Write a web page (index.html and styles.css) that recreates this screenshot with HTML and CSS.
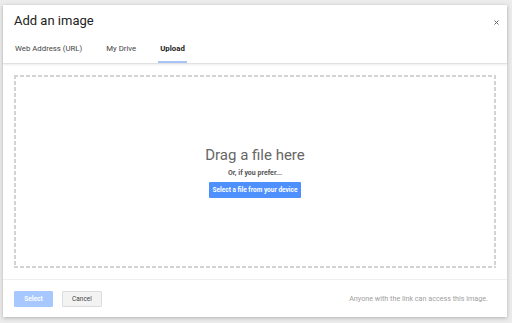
FILE: index.html
```html
<!DOCTYPE html>
<html>
<head>
<meta charset="utf-8">
<link rel="stylesheet" href="styles.css">
</head>
<body>
<div class="dialog">
  <div class="header">
    <div class="title-row">
      <div class="title">Add an image</div>
      <svg class="close" width="5" height="5" viewBox="0 0 5 5"><path d="M0.5 0.5L4.5 4.5M4.5 0.5L0.5 4.5" stroke="#666" stroke-width="1"/></svg>
    </div>
    <div class="tabs">
      <div class="tab">Web Address (URL)</div>
      <div class="tab">My Drive</div>
      <div class="tab active">Upload</div>
    </div>
  </div>
  <div class="body">
    <div class="drop">
      <div class="drag">Drag a file here</div>
      <div class="prefer">Or, if you prefer...</div>
      <div class="pick">Select a file from your device</div>
    </div>
  </div>
  <div class="footer">
    <div class="btn select">Select</div>
    <div class="btn cancel">Cancel</div>
    <div class="note">Anyone with the link can access this image.</div>
  </div>
</div>
</body>
</html>
```
FILE: styles.css
```css
html, body { margin: 0; }
body {
  width: 512px;
  height: 323px;
  background: #ececec;
  font-family: Roboto, "Liberation Sans", sans-serif;
  padding: 5px 0 0 3px;
  box-sizing: border-box;
  overflow: hidden;
}
.dialog {
  width: 504px;
  height: 312px;
  background: #fff;
  box-shadow: 0 1px 4px rgba(0,0,0,0.25);
  display: flex;
  flex-direction: column;
}
.header {
  height: 59px;
  box-sizing: border-box;
  padding: 0 0 0 11px;
  border-bottom: 1px solid #e2e2e2;
  box-shadow: 0 1px 2px rgba(0,0,0,0.08);
  display: flex;
  flex-direction: column;
}
.title-row {
  display: flex;
  align-items: center;
  justify-content: space-between;
  margin-top: 8px;
  padding-right: 8px;
}
.title {
  font-size: 13px;
  line-height: 16px;
  color: #222;
}
.close { margin-top: 2px; }
.tabs {
  display: flex;
  gap: 20px;
  margin-top: 15px;
  margin-left: -1px;
}
.tab {
  font-size: 7.8px;
  line-height: 10px;
  color: #444;
  padding: 0 2px 7px;
  border-bottom: 2px solid transparent;
}
.tab.active {
  font-weight: bold;
  color: #222;
  border-bottom-color: #a9c5f7;
}
.body {
  padding: 11px 11px 0;
  height: 204px;
  box-sizing: border-box;
}
.drop {
  height: 193px;
  display: flex;
  flex-direction: column;
  align-items: center;
  justify-content: center;
  background:
    repeating-linear-gradient(90deg, #d3d3d3 0 4px, transparent 4px 6px) left top / 100% 2px no-repeat,
    repeating-linear-gradient(90deg, #d3d3d3 0 4px, transparent 4px 6px) left bottom / 100% 2px no-repeat,
    repeating-linear-gradient(180deg, #d3d3d3 0 4px, transparent 4px 6px) left top / 2px 100% no-repeat,
    repeating-linear-gradient(180deg, #d3d3d3 0 4px, transparent 4px 6px) right top / 2px 100% no-repeat;
}
.drag {
  font-size: 15px;
  line-height: 18px;
  color: #666;
}
.prefer {
  font-size: 7px;
  line-height: 9px;
  font-weight: bold;
  color: #555;
  margin-top: 5px;
}
.pick {
  margin-top: 4px;
  background: #4d90fe;
  color: #fff;
  font-size: 6.5px;
  font-weight: bold;
  line-height: 16px;
  padding: 0 3.5px;
  border-radius: 1px;
}
.footer {
  margin-top: 11px;
  border-top: 1px solid #efefef;
  flex: 1;
  display: flex;
  align-items: center;
  padding: 0 19px 0 11px;
}
.btn {
  width: 39px;
  height: 16px;
  box-sizing: border-box;
  font-size: 6.5px;
  line-height: 14px;
  text-align: center;
  border-radius: 1px;
  font-weight: bold;
}
.select {
  background: #a6c8ff;
  color: #fff;
  border: 1px solid #a6c8ff;
}
.cancel {
  margin-left: 9px;
  width: 40px;
  background: #f3f3f3;
  border: 1px solid #dcdcdc;
  color: #444;
  font-weight: normal;
}
.note {
  margin-left: auto;
  font-size: 7.2px;
  color: #a0a0a0;
}
```
